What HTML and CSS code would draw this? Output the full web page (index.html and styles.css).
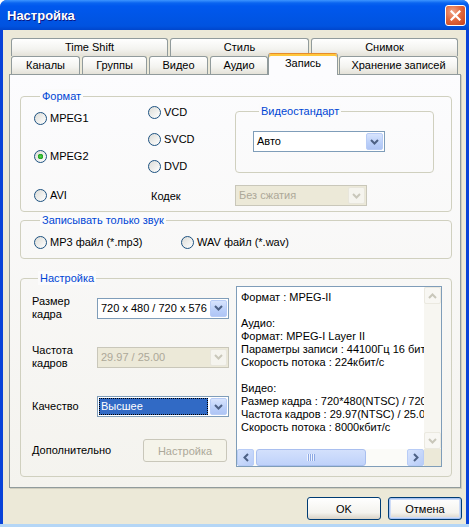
FILE: index.html
```html
<!DOCTYPE html>
<html lang="ru">
<head>
    <meta charset="UTF-8">
    <title>Настройка</title>
    <link rel="stylesheet" href="styles.css">
</head>
<body>

<div class="window">
    <div class="titlebar">
        <span class="title">Настройка</span>
        <span class="close-btn">
            <svg width="11" height="11" viewBox="0 0 11 11"><path d="M1.5 1.5l8 8M9.5 1.5l-8 8" stroke="#fff" stroke-width="2.2" stroke-linecap="square"/></svg>
        </span>
    </div>

    <div class="client">
        <!-- Вкладки -->
        <div class="tabs">
            <div class="tab-row">
                <div class="tab t-timeshift">Time Shift</div>
                <div class="tab t-style">Стиль</div>
                <div class="tab t-snap">Снимок</div>
            </div>
            <div class="tab-row">
                <div class="tab t-channels">Каналы</div>
                <div class="tab t-groups">Группы</div>
                <div class="tab t-video">Видео</div>
                <div class="tab t-audio">Аудио</div>
                <div class="tab t-record active">Запись</div>
                <div class="tab t-storage">Хранение записей</div>
            </div>
        </div>

        <div class="panel">
            <!-- Формат -->
            <div class="group format">
                <div class="group-label">Формат</div>
                <div class="format-top">
                    <div class="col-a">
                        <div class="radio"><span class="radio-box"></span>MPEG1</div>
                        <div class="radio mpeg2"><span class="radio-box checked"></span>MPEG2</div>
                    </div>
                    <div class="col-b">
                        <div class="radio"><span class="radio-box"></span>VCD</div>
                        <div class="radio"><span class="radio-box"></span>SVCD</div>
                        <div class="radio"><span class="radio-box"></span>DVD</div>
                    </div>
                    <div class="group std">
                        <div class="group-label">Видеостандарт</div>
                        <div class="combo std-combo">
                            <span class="combo-value">Авто</span>
                            <span class="combo-btn"><svg width="9" height="6" viewBox="0 0 9 6"><path d="M1 1l3.5 3.5L8 1" stroke="#4D6185" stroke-width="2" fill="none"/></svg></span>
                        </div>
                    </div>
                </div>
                <div class="format-bottom">
                    <div class="radio cell-a"><span class="radio-box"></span>AVI</div>
                    <span class="codec-label">Кодек</span>
                    <div class="combo disabled codec-combo">
                        <span class="combo-value">Без сжатия</span>
                        <span class="combo-btn"><svg width="9" height="6" viewBox="0 0 9 6"><path d="M1 1l3.5 3.5L8 1" stroke="#C9C7BA" stroke-width="2" fill="none"/></svg></span>
                    </div>
                </div>
            </div>

            <!-- Только звук -->
            <div class="group sound">
                <div class="group-label">Записывать только звук</div>
                <div class="sound-row">
                    <div class="radio mp3"><span class="radio-box"></span>MP3 файл (*.mp3)</div>
                    <div class="radio"><span class="radio-box"></span>WAV файл (*.wav)</div>
                </div>
            </div>

            <!-- Настройка -->
            <div class="group settings">
                <div class="group-label">Настройка</div>
                <div class="settings-body">
                    <div class="settings-form">
                        <div class="form-row row-size">
                            <span class="form-label">Размер<br>кадра</span>
                            <div class="combo">
                                <span class="combo-value">720 x 480 / 720 x 576</span>
                                <span class="combo-btn"><svg width="9" height="6" viewBox="0 0 9 6"><path d="M1 1l3.5 3.5L8 1" stroke="#4D6185" stroke-width="2" fill="none"/></svg></span>
                            </div>
                        </div>
                        <div class="form-row row-rate">
                            <span class="form-label">Частота<br>кадров</span>
                            <div class="combo disabled">
                                <span class="combo-value">29.97 / 25.00</span>
                                <span class="combo-btn"><svg width="9" height="6" viewBox="0 0 9 6"><path d="M1 1l3.5 3.5L8 1" stroke="#C9C7BA" stroke-width="2" fill="none"/></svg></span>
                            </div>
                        </div>
                        <div class="form-row row-quality">
                            <span class="form-label">Качество</span>
                            <div class="combo">
                                <span class="combo-value selected">Высшее</span>
                                <span class="combo-btn"><svg width="9" height="6" viewBox="0 0 9 6"><path d="M1 1l3.5 3.5L8 1" stroke="#4D6185" stroke-width="2" fill="none"/></svg></span>
                            </div>
                        </div>
                        <div class="form-row row-extra">
                            <span class="form-label wide">Дополнительно</span>
                            <span class="btn btn-disabled">Настройка</span>
                        </div>
                    </div>

                    <div class="infobox">
                        <div class="info-text">Формат : MPEG-II

Аудио:
Формат: MPEG-I Layer II
Параметры записи : 44100Гц 16 бит
Скорость потока : 224кбит/с

Видео:
Размер кадра : 720*480(NTSC) / 720*576
Частота кадров : 29.97(NTSC) / 25.00
Скорость потока : 8000кбит/с</div>
                        <div class="vscroll">
                            <span class="sb-btn sb-off"><svg width="9" height="6" viewBox="0 0 9 6"><path d="M1 5l3.5-3.5L8 5" stroke="#C9C7BA" stroke-width="2" fill="none"/></svg></span>
                            <span class="sb-track"></span>
                            <span class="sb-btn sb-off"><svg width="9" height="6" viewBox="0 0 9 6"><path d="M1 1l3.5 3.5L8 1" stroke="#C9C7BA" stroke-width="2" fill="none"/></svg></span>
                        </div>
                        <div class="hscroll">
                            <span class="sb-btn"><svg width="6" height="9" viewBox="0 0 6 9"><path d="M5 1L1.5 4.5 5 8" stroke="#4D6185" stroke-width="2" fill="none"/></svg></span>
                            <span class="sb-thumb"><span class="grip"></span></span>
                            <span class="sb-track"></span>
                            <span class="sb-btn"><svg width="6" height="9" viewBox="0 0 6 9"><path d="M1 1l3.5 3.5L1 8" stroke="#4D6185" stroke-width="2" fill="none"/></svg></span>
                        </div>
                        <div class="sb-corner"></div>
                    </div>
                </div>
            </div>
        </div>

        <div class="buttons">
            <span class="btn">OK</span>
            <span class="btn btn-default">Отмена</span>
        </div>
    </div>
</div>

</body>
</html>
```

FILE: styles.css
```css
* {
    box-sizing: border-box;
}

body {
    margin: 0;
    font-family: "Liberation Sans", Arial, sans-serif;
    font-size: 11px;
    color: #000;
    background: #fff;
}

.window {
    width: 469px;
    height: 527px;
    display: flex;
    flex-direction: column;
    background: #0842D8;
    border-bottom: 3px solid #B4D6F6;
    border-radius: 7px 7px 0 0;
    overflow: hidden;
}

/* Заголовок окна */
.titlebar {
    height: 30px;
    flex: none;
    display: flex;
    align-items: center;
    justify-content: space-between;
    padding: 0 3px 0 7px;
    background: linear-gradient(#3D95FF 0, #0A64F0 3px, #0058EE 6px, #0055E5 18px, #0053E0 26px, #0046CC 30px);
}

.title {
    color: #fff;
    font-weight: bold;
    font-size: 13px;
    text-shadow: 1px 1px 0 #0A1883;
    padding-top: 1px;
}

.close-btn {
    width: 21px;
    height: 21px;
    display: flex;
    align-items: center;
    justify-content: center;
    border: 1px solid #fff;
    border-radius: 3px;
    background: radial-gradient(circle at 35% 30%, #F0A68A 0, #E2693F 45%, #C4401C 100%);
}

.client {
    flex: 1;
    margin: 0 3px;
    padding: 8px 0 0 6px;
    background: #ECE9D8;
}

/* Вкладки */
.tabs {
    margin-left: 2px;
}

.tab-row {
    display: flex;
    align-items: flex-end;
    height: 18px;
}

.tab {
    height: 18px;
    margin-right: 2px;
    border: 1px solid #919B9C;
    border-bottom: none;
    border-radius: 3px 3px 0 0;
    background: linear-gradient(#FFFFFF, #F3F3EF 60%, #E4E2D8);
    text-align: center;
    line-height: 17px;
    white-space: nowrap;
}

.t-timeshift { width: 157px; }
.t-style { width: 139px; }
.t-snap { width: 147px; }
.t-channels { width: 69px; }
.t-groups { width: 65px; }
.t-video { width: 59px; }
.t-audio { width: 58px; margin-right: 0; }
.t-record { width: 70px; margin-right: 1px; }
.t-storage { width: 119px; }

.tab.active {
    position: relative;
    z-index: 1;
    height: 22px;
    margin-bottom: -1px;
    padding-top: 1px;
    border-top-color: #E68B2C;
    box-shadow: inset 0 2px 0 #FFC73C;
    background: #FCFCFE;
}

.panel {
    width: 452px;
    height: 414px;
    padding: 21px 8px 0 10px;
    border: 1px solid #919B9C;
    background: linear-gradient(#FCFCFE, #F4F3EE);
    box-shadow: 1px 1px 0 #D0CEBF;
}

/* Групповые рамки */
.group {
    border: 1px solid #D0D0BF;
    border-radius: 4px;
}

.group-label {
    width: fit-content;
    margin: -8px 0 0 6px;
    padding: 0 2px;
    line-height: 14px;
    color: #0046D5;
    background: #FBFBFB;
    white-space: nowrap;
}

.radio {
    display: flex;
    align-items: center;
    gap: 3px;
    height: 13px;
    line-height: 13px;
    white-space: nowrap;
}

.radio-box {
    width: 13px;
    height: 13px;
    flex: none;
    border: 1px solid #1C5180;
    border-radius: 50%;
    background: linear-gradient(135deg, #DCDCD7, #FFFFFF);
}

.radio-box.checked {
    background: radial-gradient(circle, #55D551 0, #21A121 2.5px, transparent 3px), linear-gradient(135deg, #DCDCD7, #FFFFFF);
}

/* Формат */
.format {
    padding: 0 0 5px 13px;
}

.format-top {
    display: flex;
    align-items: flex-start;
}

.col-a {
    width: 114px;
    margin-top: 9px;
}

.mpeg2 {
    margin-top: 25px;
}

.col-b {
    width: 87px;
    margin-top: 3px;
    display: flex;
    flex-direction: column;
    gap: 14px;
}

.std {
    width: 199px;
    margin-top: 8px;
    padding: 0 0 20px 17px;
}

.std-combo {
    width: 164px;
    margin-top: 13px;
}

.format-bottom {
    display: flex;
    align-items: center;
    margin-top: 12px;
}

.cell-a {
    width: 114px;
}

.codec-label {
    width: 87px;
    padding-left: 3px;
}

.codec-combo {
    width: 199px;
}

/* Выпадающие списки */
.combo {
    display: flex;
    width: 132px;
    height: 21px;
    border: 1px solid #7F9DB9;
    background: #fff;
}

.combo-value {
    flex: 1;
    padding-left: 3px;
    line-height: 19px;
    white-space: nowrap;
    overflow: hidden;
}

.combo-value.selected {
    margin: 1px;
    padding-left: 2px;
    line-height: 17px;
    color: #fff;
    background: #316AC5;
    outline: 1px dotted #000;
    outline-offset: -1px;
}

.combo-btn {
    width: 17px;
    margin: 1px;
    display: flex;
    align-items: center;
    justify-content: center;
    border: 1px solid #B8CCF6;
    border-radius: 2px;
    background: linear-gradient(#D8E4FD, #BACFF9 60%, #AFC5F5);
}

.combo.disabled {
    border-color: #C9C7BA;
    background: #ECE9D8;
    color: #ACA899;
}

.combo.disabled .combo-btn {
    border-color: #E8E6DC;
    background: #F5F4EE;
}

/* Только звук */
.sound {
    margin-top: 8px;
    padding: 0 0 9px 13px;
}

.sound-row {
    display: flex;
    margin-top: 9px;
}

.mp3 {
    width: 147px;
}

/* Настройка */
.settings {
    margin-top: 19px;
    padding: 0 9px 9px 11px;
}

.settings-body {
    display: flex;
    align-items: flex-start;
}

.settings-form {
    width: 197px;
    margin-right: 7px;
    margin-top: 10px;
}

.form-row {
    display: flex;
    align-items: center;
}

.form-label {
    width: 65px;
    line-height: 13px;
}

.form-label.wide {
    width: 111px;
}

.row-size { height: 26px; }
.row-rate { height: 26px; margin-top: 23px; }
.row-quality { height: 21px; margin-top: 26px; }
.row-extra { height: 23px; margin-top: 22px; }

/* Кнопки */
.btn {
    width: 74px;
    height: 23px;
    display: flex;
    align-items: center;
    justify-content: center;
    border: 1px solid #003C74;
    border-radius: 3px;
    background: linear-gradient(#FFFFFF, #F4F3EE 70%, #D8D2C6);
}

.btn-default {
    box-shadow: inset 0 0 0 1px #A6C2F2, inset 0 0 0 2px #CEDCF7;
}

.btn-disabled {
    width: 84px;
    border-color: #C9C7BA;
    color: #ACA899;
    background: #F5F4EA;
}

.buttons {
    display: flex;
    justify-content: flex-end;
    gap: 7px;
    margin-top: 9px;
    padding-right: 4px;
}

/* Информационное поле */
.infobox {
    width: 206px;
    height: 181px;
    margin-top: 1px;
    border: 1px solid #7F9DB9;
    background: #fff;
    display: grid;
    grid-template-columns: 1fr 17px;
    grid-template-rows: 1fr 17px;
}

.info-text {
    padding: 4px 0 0 4px;
    line-height: 13px;
    white-space: pre;
    overflow: hidden;
}

.vscroll {
    display: flex;
    flex-direction: column;
    background: #F7F6F1;
}

.hscroll {
    display: flex;
    background: #FBFBF8;
}

.sb-btn {
    width: 17px;
    height: 17px;
    flex: none;
    display: flex;
    align-items: center;
    justify-content: center;
    border: 1px solid #B8CCF6;
    border-radius: 2px;
    background: linear-gradient(135deg, #D8E4FD, #B7CCF8);
}

.sb-btn.sb-off {
    border-color: #EBE9E0;
    background: #F8F7F3;
}

.sb-track {
    flex: 1;
}

.sb-thumb {
    width: 110px;
    margin-left: 2px;
    display: flex;
    align-items: center;
    justify-content: center;
    border: 1px solid #A9BFEF;
    border-radius: 3px;
    background: linear-gradient(#D3E0FC, #BFD2FA);
}

.grip {
    width: 8px;
    height: 7px;
    background: repeating-linear-gradient(90deg, #EEF3FE 0, #EEF3FE 1px, #8CA8E4 1px, #8CA8E4 2px);
}

.sb-corner {
    background: #ECE9D8;
}
```
